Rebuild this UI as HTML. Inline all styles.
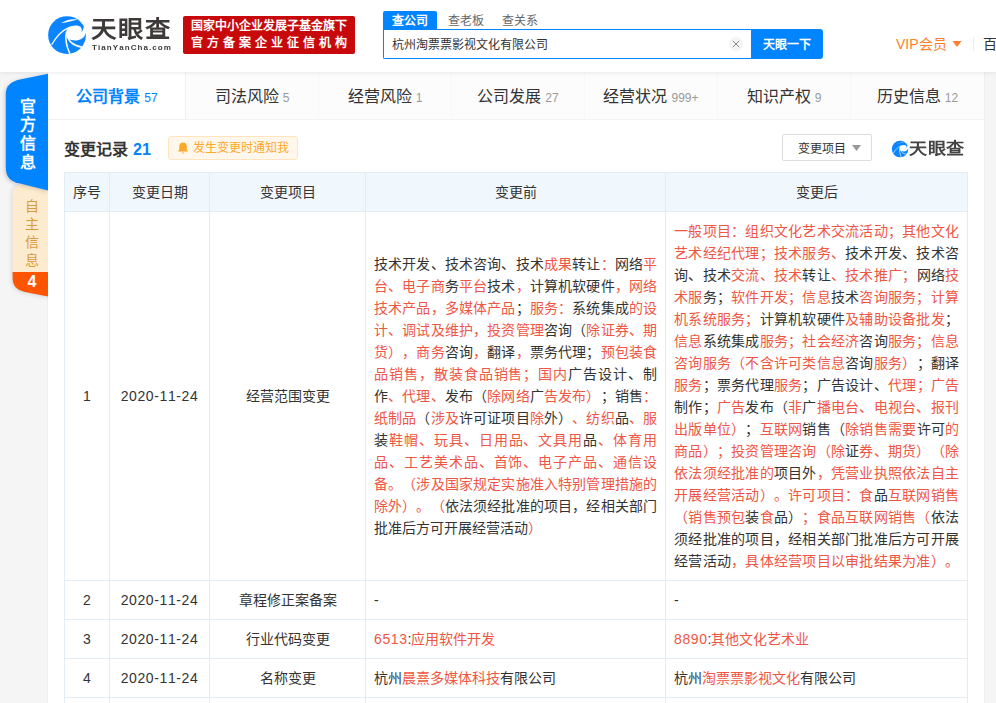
<!DOCTYPE html>
<html lang="zh-CN">
<head>
<meta charset="utf-8">
<title>天眼查</title>
<style>
*{box-sizing:border-box;margin:0;padding:0}
html,body{width:996px;height:703px;overflow:hidden}
body{position:relative;background:#f5f5f5;font-family:"Liberation Sans",sans-serif;color:#333;font-size:14px}
.abs{position:absolute;white-space:nowrap}
body{text-spacing-trim:space-all;font-kerning:none}
#header{position:absolute;left:0;top:0;width:996px;height:72px;background:#fff;box-shadow:0 1px 4px rgba(0,0,0,.08);z-index:3}
#brand{left:91px;top:12.5px;font-size:22.5px;font-weight:900;color:#3e3a39;letter-spacing:1px;line-height:34px;transform:scaleX(1.13);transform-origin:0 50%}
#brand-en{left:92px;top:37.3px;font-size:16px;font-weight:bold;color:#3e3a39;letter-spacing:2.15px;line-height:20px;transform:scale(.5);transform-origin:0 50%}
#badge{left:183px;top:16px;width:172px;height:38px;background:#c8090b;border-radius:2px;color:#fff;font-weight:bold;font-size:12px;line-height:17px;padding:2px 0 0 8px}
#badge .l2{letter-spacing:4px}
#stab1{left:383px;top:11px;width:54px;height:18px;background:#0084ff;color:#fff;font-weight:bold;font-size:12px;line-height:21px;text-align:center;border-radius:2px 2px 0 0}
.stab{top:11px;font-size:12px;line-height:21px;color:#666}
#sinput{left:383px;top:29px;width:369px;height:30px;border:1px solid #0084ff;border-right:none;border-radius:0 0 0 2px;background:#fff;font-size:12px;line-height:30px;padding-left:8px;color:#333}
#sclear{left:729px;top:37px;width:14px;height:14px;border-radius:7px;background:#f4f4f4}
#sbtn{left:751px;top:29px;width:72px;height:30px;background:#0084ff;border-radius:0 3px 3px 0;color:#fff;font-weight:bold;font-size:12px;line-height:32.5px;text-align:center}
#vip{left:896px;top:33px;font-size:14px;line-height:22px;color:#ff7e28}
#vdiv{left:973px;top:37px;width:1px;height:14px;background:#ececec}
#bai{left:983px;top:33px;font-size:14px;line-height:22px;color:#333}
#panel{position:absolute;left:48px;top:72px;width:936px;height:640px;background:#fff;box-shadow:0 0 2px rgba(0,0,0,.09)}
#nav{position:absolute;left:0;top:72px;width:984px;height:48px;z-index:1}
.tab{position:absolute;top:0;height:48px;width:133px;background:#fcfcfc;border-left:1px solid #f7f7f7;border-bottom:1px solid #f2f2f2;text-align:center;font-size:16px;line-height:50px;color:#333;white-space:nowrap}
.tab i{font-style:normal;font-size:12px;color:#999;margin-left:4px}
.tab.on{background:#fff;border-left:none;color:#0084ff;font-weight:bold}
.tab.on i{color:#0084ff;font-weight:normal}
#ttl{left:64px;top:138.5px;font-size:16px;font-weight:bold;line-height:22px;color:#333}
#ttl b{color:#0084ff;margin-left:5px}
#bell{left:168px;top:136px;width:130px;height:24px;background:#fff7eb;border:1px solid #ffe4bf;border-radius:3px;color:#ffa726;font-size:12px;line-height:22px;padding-left:24px}
#drop{left:782px;top:134px;width:90px;height:27px;border:1px solid #ddd;border-radius:2px;background:#fff;font-size:12px;line-height:28px;padding-left:15px;color:#333}
#wm{left:909px;top:137px;font-size:16px;font-weight:900;color:#444;letter-spacing:.5px;line-height:24px;transform:scaleX(1.13);transform-origin:0 50%}
table{position:absolute;left:64px;top:172px;width:903px;border-collapse:collapse;table-layout:fixed;font-size:14px;line-height:22px;color:#333}
td,th{border:1px solid #e2ecf5;padding:8px;font-weight:normal;vertical-align:middle;text-align:left;white-space:nowrap;overflow:hidden}
th{background:#f0f7fd;text-align:center;height:39px}
td.c{text-align:center}
tr.r{height:39px}
.d{letter-spacing:.6px}
em{font-style:normal;color:#ef5644}
.w{display:inline-block;white-space:nowrap;text-align:justify;text-align-last:justify;text-justify:inter-character}
.j{text-align:justify;text-align-last:justify;text-justify:inter-character}
</style>
</head>
<body>
<div id="header">
<svg class="abs" style="left:44px;top:12px" width="48" height="46" viewBox="0 0 734 703">
<circle cx="352" cy="352" r="289" fill="#0a84ff"/>
<path fill="#fff" d="M370 236C430 203 530 193 565 233C580 255 580 285 573 305C590 292 606 262 603 232L680 232L680 330L638 326C625 380 580 427 500 434C440 437 378 420 348 394C326 350 332 285 370 236Z"/>
<path fill="#fff" d="M258 172C330 122 430 98 518 114C440 134 350 154 258 172Z"/>
<path fill="none" stroke="#fff" stroke-width="19" d="M116 500C180 390 260 290 378 238"/>
<path fill="none" stroke="#fff" stroke-width="23" d="M343 300C324 400 348 540 397 640"/>
<path fill="none" stroke="#fff" stroke-width="25" d="M366 395C400 470 480 520 578 537"/>
</svg>
<div class="abs" id="brand" style="width:70.5px;text-align-last:justify;text-justify:inter-character">天眼查</div>
<div class="abs" id="brand-en">TianYanCha.com</div>
<div class="abs" id="badge"><div style="width:156px;text-align-last:justify;text-justify:inter-character">国家中小企业发展子基金旗下</div><div class="l2" style="width:160px;text-align-last:justify;text-justify:inter-character">官方备案企业征信机构</div></div>
<div class="abs" id="stab1"><span class="w" style="width:36px">查公司</span></div>
<div class="abs stab" style="left:448px"><span class="w" style="width:36px">查老板</span></div>
<div class="abs stab" style="left:502px"><span class="w" style="width:36px">查关系</span></div>
<div class="abs" id="sinput"><span class="w" style="width:156px">杭州淘票票影视文化有限公司</span></div>
<div class="abs" id="sclear"><svg width="14" height="14" viewBox="0 0 14 14"><path d="M3.8 3.8L10.2 10.2M10.2 3.8L3.8 10.2" stroke="#8a8a8a" stroke-width="1" fill="none"/></svg></div>
<div class="abs" id="sbtn"><span class="w" style="width:48px">天眼一下</span></div>
<div class="abs" id="vip">VIP<span class="w" style="width:28px">会员</span></div>
<svg class="abs" style="left:952px;top:41px" width="10" height="6" viewBox="0 0 10 6"><path d="M0.5 0L9.5 0L5 6Z" fill="#ff7e28"/></svg>
<div class="abs" id="vdiv"></div>
<div class="abs" id="bai">百度</div>
</div>

<div id="panel"></div>
<div id="nav">
<div class="tab on" style="left:48px;width:138px"><span class="w" style="width:64px">公司背景</span><i>57</i></div>
<div class="tab" style="left:185px;border-left-color:#f0f0f0"><span class="w" style="width:64px">司法风险</span><i>5</i></div>
<div class="tab" style="left:318px"><span class="w" style="width:64px">经营风险</span><i>1</i></div>
<div class="tab" style="left:451px"><span class="w" style="width:64px">公司发展</span><i>27</i></div>
<div class="tab" style="left:584px"><span class="w" style="width:64px">经营状况</span><i>999+</i></div>
<div class="tab" style="left:717px"><span class="w" style="width:64px">知识产权</span><i>9</i></div>
<div class="tab" style="left:850px;width:134px"><span class="w" style="width:64px">历史信息</span><i>12</i></div>
</div>

<svg class="abs" style="left:0;top:66px;z-index:4" width="48" height="240" viewBox="0 66 48 240">
<g style="filter:drop-shadow(-1px 1px 2px rgba(0,0,0,.12))"><path d="M48 190.5L25 184.6C16 183.4 12.6 188 12.6 197L12.6 272L48 272Z" fill="#fdebcf"/>
<path d="M12.6 272L48 272L48 296.5L25 292C16 290 12.6 285 12.6 278Z" fill="#ff5500"/></g>
<path style="filter:drop-shadow(-1px 1px 2px rgba(0,0,0,.18))" d="M48 73.8L20 79.6C11 81.5 5.8 86 5.8 94L5.8 167C5.8 177 10 181 18 183L48 190.5Z" fill="#0084ff"/>
</svg>
<div class="abs" style="left:19px;top:97.6px;width:17px;z-index:5;color:#fff;font-weight:bold;font-size:16px;line-height:18.8px;white-space:normal;text-align:center">官方信息</div>
<div class="abs" style="left:24.5px;top:196.5px;width:14px;z-index:5;color:#dc9a3a;font-size:14px;line-height:18.3px;white-space:normal;text-align:center">自主信息</div>
<div class="abs" style="left:22px;top:272px;width:20px;z-index:5;color:#fff;font-weight:bold;font-size:16px;line-height:20px;text-align:center">4</div>

<div class="abs" id="ttl"><span class="w" style="width:64px">变更记录</span><b>21</b></div>
<div class="abs" id="bell"><span class="w" style="width:96px">发生变更时通知我</span></div>
<svg class="abs" style="left:177px;top:141.6px" width="12" height="13" viewBox="0 0 11 12"><path d="M5.5 0.5C3.2 0.5 2 2.3 2 4.5L2 7L0.8 8.8L10.2 8.8L9 7L9 4.5C9 2.3 7.8 0.5 5.5 0.5ZM4.2 9.8A1.4 1.4 0 0 0 6.8 9.8Z" fill="#ffa726"/></svg>
<div class="abs" id="drop"><span class="w" style="width:48px">变更项目</span></div>
<svg class="abs" style="left:852px;top:145px" width="9" height="6" viewBox="0 0 9 6"><path d="M0 0L9 0L4.5 6Z" fill="#999"/></svg>
<svg class="abs" style="left:889.5px;top:138.5px" width="21" height="20.1" viewBox="0 0 734 703">
<circle cx="352" cy="352" r="289" fill="#0a84ff"/>
<path fill="#fff" d="M370 236C430 203 530 193 565 233C580 255 580 285 573 305C590 292 606 262 603 232L680 232L680 330L638 326C625 380 580 427 500 434C440 437 378 420 348 394C326 350 332 285 370 236Z"/>
<path fill="#fff" d="M262 168C330 130 430 108 514 117C440 128 350 146 262 168Z"/>
<path fill="none" stroke="#fff" stroke-width="20" d="M116 500C180 390 260 290 378 238"/>
<path fill="none" stroke="#fff" stroke-width="24" d="M343 300C324 400 348 540 397 640"/>
<path fill="none" stroke="#fff" stroke-width="24" d="M370 395C400 470 480 520 575 535"/>
</svg>
<div class="abs" id="wm" style="width:49.5px;text-align-last:justify;text-justify:inter-character">天眼查</div>

<table>
<colgroup><col style="width:45px"><col style="width:100px"><col style="width:156px"><col style="width:300px"><col style="width:302px"></colgroup>
<tr><th><span class="w" style="width:28px">序号</span></th><th><span class="w" style="width:56px">变更日期</span></th><th><span class="w" style="width:56px">变更项目</span></th><th><span class="w" style="width:42px">变更前</span></th><th><span class="w" style="width:42px">变更后</span></th></tr>
<tr style="height:369px"><td class="c">1</td><td class="c d">2020-11-24</td><td class="c"><span class="w" style="width:84px">经营范围变更</span></td>
<td><div class="j">技术开发、技术咨询、技术<em>成果</em>转让<em>：</em>网络<em>平</em></div>
<div class="j"><em>台、电子商</em>务<em>平台</em>技术<em>，</em>计算机软硬件<em>，网络</em></div>
<div class="j"><em>技术产品，多媒体产品</em>；<em>服务：</em>系统集成<em>的设</em></div>
<div class="j"><em>计、调试及维护，投资管理</em>咨询（<em>除证券、期</em></div>
<div class="j"><em>货），商务</em>咨询<em>，</em>翻译<em>，</em>票务代理；<em>预包装食</em></div>
<div class="j"><em>品销售，散装食品销售；国内</em>广告设计、制</div>
<div class="j">作<em>、代理、</em>发布（<em>除网络</em>广<em>告发布）</em>；销售<em>：</em></div>
<div class="j"><em>纸制品</em>（<em>涉及</em>许可证项目<em>除</em>外）<em>、纺织</em>品<em>、服</em></div>
<div class="j">装<em>鞋帽、玩具、日用品、文具用</em>品<em>、体育用</em></div>
<div class="j"><em>品、工艺美术品、首饰、电子产品、通信设</em></div>
<div class="j"><em>备。（涉及国家规定实施准入特别管理措施的</em></div>
<div class="j"><em>除外）。（</em>依法须经批准的项目，经相关部门</div>
<div><span class="w" style="width:168px">批准后方可开展经营活动<em>）</em></span></div></td>
<td><div class="j"><em>一般项目：组织文化艺术交流活动；其他文化</em></div>
<div class="j"><em>艺术经纪代理；技术服务、</em>技术开发、技术咨</div>
<div class="j">询、技术<em>交流、技术</em>转让<em>、技术推广；</em>网络<em>技</em></div>
<div class="j"><em>术服</em>务；<em>软件开发；信息</em>技术<em>咨询服务；计算</em></div>
<div class="j"><em>机系统服务；</em>计算机软硬件<em>及辅助设备批发</em>；</div>
<div class="j"><em>信息</em>系统集成<em>服务；社会经济</em>咨询<em>服务；信息</em></div>
<div class="j"><em>咨询服务（不含许可类信息</em>咨询<em>服务）</em>；翻译</div>
<div class="j"><em>服务</em>；票务代理<em>服务</em>；广告设计、<em>代理；广告</em></div>
<div class="j">制作；<em>广告</em>发布（<em>非</em>广<em>播电台、电视台、报刊</em></div>
<div class="j"><em>出版单位）</em>；<em>互联网</em>销售（<em>除销售需要</em>许可<em>的</em></div>
<div class="j"><em>商品）；投资管理咨询（除</em>证<em>券、期货）（除</em></div>
<div class="j"><em>依法须经批准的</em>项目外<em>，凭营业执照依法自主</em></div>
<div class="j"><em>开展经营活动）。许可项目：食</em>品<em>互联网销售</em></div>
<div class="j"><em>（销售预包</em>装<em>食</em>品）<em>；食品互联网销售（</em>依法</div>
<div class="j">须经批准的项目，经相关部门批准后方可开展</div>
<div class="j">经营活动<em>，具体经营项目以审批结果为准）。</em></div></td></tr>
<tr class="r"><td class="c">2</td><td class="c d">2020-11-24</td><td class="c"><span class="w" style="width:98px">章程修正案备案</span></td><td>-</td><td>-</td></tr>
<tr class="r"><td class="c">3</td><td class="c d">2020-11-24</td><td class="c"><span class="w" style="width:84px">行业代码变更</span></td><td><em class="d">6513</em>:<em><span class="w" style="width:84px">应用软件开发</span></em></td><td><em class="d">8890</em>:<em><span class="w" style="width:98px">其他文化艺术业</span></em></td></tr>
<tr class="r"><td class="c">4</td><td class="c d">2020-11-24</td><td class="c"><span class="w" style="width:56px">名称变更</span></td><td><span class="w" style="width:28px">杭州</span><em><span class="w" style="width:98px">晨熹多媒体科技</span></em><span class="w" style="width:56px">有限公司</span></td><td><span class="w" style="width:28px">杭州</span><em><span class="w" style="width:98px">淘票票影视文化</span></em><span class="w" style="width:56px">有限公司</span></td></tr>
<tr class="r"><td class="c">5</td><td class="c d">2020-11-24</td><td class="c">&nbsp;</td><td>&nbsp;</td><td>&nbsp;</td></tr>
</table>
</body>
</html>
